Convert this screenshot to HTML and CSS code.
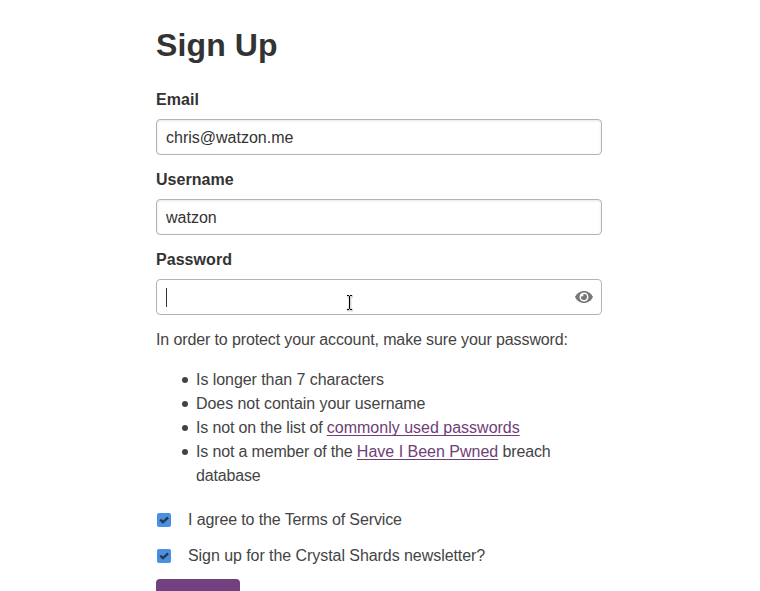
FILE: index.html
```html
<!DOCTYPE html>
<html lang="en">
<head>
<meta charset="utf-8">
<title>Sign Up</title>
<link rel="stylesheet" href="styles.css">
</head>
<body>
<main class="signup">
  <h1>Sign Up</h1>
  <form>
    <label class="field-label" for="email">Email</label>
    <input class="field" id="email" type="text" value="chris@watzon.me">
    <label class="field-label" for="username">Username</label>
    <input class="field" id="username" type="text" value="watzon">
    <span class="field-label">Password</span>
    <div class="field password">
      <span class="caret"></span>
      <svg class="eye" viewBox="0 0 18 12"><path fill="currentColor" fill-rule="evenodd" d="M9 0C5 0 1.700 2.400 0 6c1.700 3.600 5 6 9 6s7.300-2.400 9-6c-1.700-3.600-5-6-9-6zM9 1.500a4.500 4.500 0 1 1 0 9a4.500 4.500 0 1 1 0-9z"/><path fill="currentColor" d="M9 3a3 3 0 1 1-2.900 2.200A1.500 1.500 0 0 0 8.200 3.100A3 3 0 0 1 9 3z"/></svg>
      <svg class="pointer" viewBox="0 0 9 17"><path d="M2 2.500h6M5 2v13M2 16h6" fill="none" stroke="#aaa" stroke-width="3" opacity=".45"/><path d="M2 1.500h2M5 1.500h2M4.500 2v13M2 15.500h2M5 15.500h2" fill="none" stroke="#000"/></svg>
    </div>
    <p>In order to protect your account, make sure your password:</p>
    <ul>
      <li>Is longer than 7 characters</li>
      <li>Does not contain your username</li>
      <li class="linked">Is not on the list of <a href="#">commonly used passwords</a></li>
      <li class="linked">Is not a member of the <a href="#">Have I Been Pwned</a> breach database</li>
    </ul>
    <div class="check terms"><svg class="box" viewBox="0 0 14 14"><path d="M3.200 6.700l2.700 2.500 5.200-4.700" fill="none" stroke="#29394f" stroke-width="2.400"/></svg>I agree to the Terms of Service</div>
    <div class="check"><svg class="box" viewBox="0 0 14 14"><path d="M3.200 6.700l2.700 2.500 5.200-4.700" fill="none" stroke="#29394f" stroke-width="2.400"/></svg>Sign up for the Crystal Shards newsletter?</div>
    <button class="submit" type="button" aria-label="Sign Up"></button>
  </form>
</main>
</body>
</html>
```
FILE: styles.css
```css
* { box-sizing: border-box; }
html, body { height: 100%; overflow: hidden; }
body { margin: 0; background: #fff; color: #444; font: 16px/24px "Liberation Sans", Arial, sans-serif; }
.signup { width: 446px; margin-left: 156px; padding-top: 25px; }
h1 { margin: 0 0 22px; font-size: 32px; line-height: 40px; letter-spacing: .12px; color: #333; }
.field-label { display: block; padding-top: 1px; margin-bottom: 7px; color: #333; font-weight: bold; letter-spacing: .05px; }
.field { display: block; width: 100%; height: 36px; margin: 0 0 12px; padding: 2px 9px 0; border: 1px solid #b3b3b3; border-radius: 4px; background: #fff; box-shadow: inset 0 1px 3px rgba(0,0,0,.1); color: #333; font: inherit; }
.password { display: flex; align-items: center; position: relative; padding-top: 0; box-shadow: none; }
.caret { width: 1px; height: 19px; background: #333; }
.eye { width: 18px; height: 12px; margin-left: auto; margin-right: -1px; color: #777; }
.pointer { position: absolute; left: 188px; top: 14px; width: 9px; height: 17px; overflow: visible; }
p { margin: 13px 0 16px; letter-spacing: -.12px; }
ul { margin: 0 0 20px; padding-left: 40px; list-style: none; letter-spacing: -.06px; }
li { position: relative; }
li::before { content: ""; position: absolute; left: -14px; top: 9px; width: 6px; height: 6px; border-radius: 50%; background: #444; }
.linked { letter-spacing: -.16px; }
a { color: #6f3d78; letter-spacing: 0; text-decoration-skip-ink: none; text-decoration-thickness: 1px; text-underline-offset: 2px; }
.check { display: flex; align-items: center; margin-bottom: 11px; letter-spacing: -.06px; }
.terms { margin-bottom: 12px; letter-spacing: -.12px; }
.box { width: 14px; height: 14px; margin: 0 17px 0 1px; border-radius: 2px; background: #4a90e2; }
.submit { display: block; width: 84px; height: 40px; border: 0; border-radius: 4px; background: #724280; }
```
